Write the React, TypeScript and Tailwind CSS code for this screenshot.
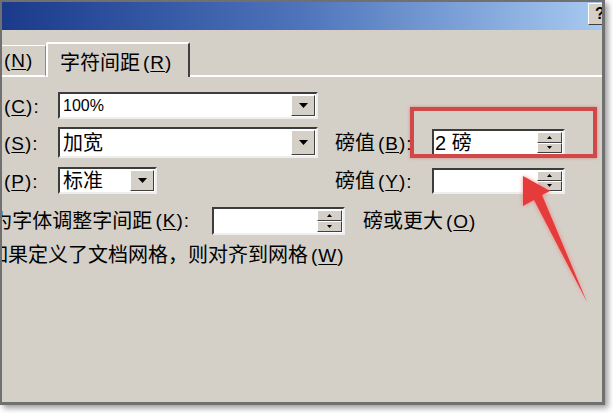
import React from "react";

const font = "font-['Liberation_Sans','Noto_Sans_CJK_SC',sans-serif]";

function Key({ k, colon = false, gap = true }: { k: string; colon?: boolean; gap?: boolean }) {
  return (
    <span className={`${gap ? "ml-[3px]" : ""} text-[19px] tracking-[1px]`}>
      (<span className="underline underline-offset-2">{k}</span>){colon ? ":" : ""}
    </span>
  );
}

function DropButton() {
  return (
    <div className="flex h-full w-[24px] items-center justify-center border border-t-white border-l-white border-r-[#404040] border-b-[#404040] bg-[#d4d0c8]">
      <svg width="9" height="5" viewBox="0 0 9 5">
        <polygon points="0,0 9,0 4.5,5" fill="#000" />
      </svg>
    </div>
  );
}

function Combo({ value, size, text }: { value: string; size: string; text: string }) {
  return (
    <div className={`flex ${size} border-2 border-t-[#3c3c3c] border-l-[#3c3c3c] border-r-[#eeeeee] border-b-[#eeeeee] bg-white`}>
      <div className={`flex flex-1 items-center pl-[3px] leading-none ${text}`}>{value}</div>
      <div className="py-[1px] pr-[1px]">
        <DropButton />
      </div>
    </div>
  );
}

function SpinButton({ up }: { up?: boolean }) {
  return (
    <div className="flex flex-1 items-center justify-center border border-t-white border-l-white border-r-[#404040] border-b-[#404040] bg-[#d4d0c8]">
      <svg width="5" height="3" viewBox="0 0 5 3">
        <polygon points={up ? "0,3 5,3 2.5,0" : "0,0 5,0 2.5,3"} fill="#000" />
      </svg>
    </div>
  );
}

function Spin({ value, size }: { value?: string; size: string }) {
  return (
    <div className={`flex ${size} border-2 border-t-[#3c3c3c] border-l-[#3c3c3c] border-r-[#eeeeee] border-b-[#eeeeee] bg-white`}>
      <div className="flex flex-1 items-center pl-[1px] text-[20px] leading-none">{value}</div>
      <div className="flex w-[26px] flex-col py-[1px] pr-[1px]">
        <SpinButton up />
        <SpinButton />
      </div>
    </div>
  );
}

export default function App() {
  return (
    <div className={`relative h-[413px] w-[613px] overflow-hidden bg-white text-black ${font}`}>
      <div className="flex h-[405px] w-[605px] flex-col overflow-hidden border-t-2 border-l-2 border-r-[3px] border-b-[3px] border-[#707070] bg-[#d4d0c8] shadow-[3px_3px_6px_rgba(0,0,0,0.4)]">
        {/* title bar */}
        <div className="flex h-[28px] justify-end overflow-hidden bg-gradient-to-r from-[#1b3a8b] via-[#4f74bb] to-[#a8caf0]">
          <div className="mt-[1px] mr-[-10px] flex h-[22px] w-[24px] items-center justify-center border border-t-white border-l-white border-r-[#404040] border-b-[#404040] bg-[#d4d0c8] text-[16px] font-bold">
            ?
          </div>
        </div>

        {/* tabs */}
        <div className="flex h-[47px] items-end">
          <div className="flex h-[32px] w-[44px] items-center border-t border-r border-b-2 border-t-white border-r-[#8a8a8a] border-b-white pl-[2px] leading-none">
            <Key k="N" gap={false} />
          </div>
          <div className="flex h-[35px] w-[144px] items-center rounded-t-[2px] border-t-2 border-l-2 border-r-2 border-t-white border-l-white border-r-[#404040] pl-[12px] pt-[4px] text-[20px] leading-none">
            字符间距<Key k="R" />
          </div>
          <div className="h-[2px] flex-1 bg-white" />
        </div>

        {/* body */}
        <div className="flex flex-col text-[20px] leading-none">
          <div className="mt-[15px] flex h-[27px] items-center">
            <div className="w-[56px] pl-[2px]">
              <Key k="C" colon gap={false} />
            </div>
            <Combo value="100%" size="w-[260px] h-[27px]" text="text-[16px]" />
          </div>

          <div className="mt-[8px] flex h-[31px] items-center">
            <div className="flex w-[316px] items-center">
              <div className="w-[56px] pl-[2px]">
                <Key k="S" colon gap={false} />
              </div>
              <Combo value="加宽" size="w-[260px] h-[31px]" text="text-[20px]" />
            </div>
            <div className="w-[114px] pl-[17px]">
              磅值<Key k="B" colon />
            </div>
            <Spin value="2 磅" size="w-[133px] h-[27px]" />
          </div>

          <div className="mt-[9px] flex h-[27px] items-center">
            <div className="flex w-[316px] items-center">
              <div className="w-[56px] pl-[2px]">
                <Key k="P" colon gap={false} />
              </div>
              <Combo value="标准" size="w-[99px] h-[27px]" text="text-[20px]" />
            </div>
            <div className="w-[114px] pl-[17px]">
              磅值<Key k="Y" colon />
            </div>
            <Spin size="w-[133px] h-[26px]" />
          </div>

          <div className="mt-[13px] flex h-[28px] items-center">
            <div className="flex w-[210px] justify-end overflow-hidden whitespace-nowrap pr-[22px]">
              为字体调整字间距<Key k="K" colon />
            </div>
            <Spin size="w-[133px] h-[28px]" />
            <div className="ml-[18px] whitespace-nowrap">
              磅或更大<Key k="O" />
            </div>
          </div>

          <div className="mt-[10px] -ml-[14px] whitespace-nowrap">
            如果定义了文档网格，则对齐到网格<Key k="W" />
          </div>
        </div>
      </div>

      {/* annotation: red box */}
      <div className="absolute left-[410px] top-[107px] h-[51px] w-[187px] border-4 border-[#d04848] shadow-[0_0_3px_rgba(220,60,60,0.5)]" />

      {/* annotation: red arrow */}
      <svg className="pointer-events-none absolute left-0 top-0 drop-shadow-[0_0_2px_rgba(255,90,90,0.7)]" width="613" height="413" viewBox="0 0 613 413">
        <polygon points="523,176 550,191 542,195 587,302 534,200 523,206" fill="#e63b3b" />
      </svg>
    </div>
  );
}
